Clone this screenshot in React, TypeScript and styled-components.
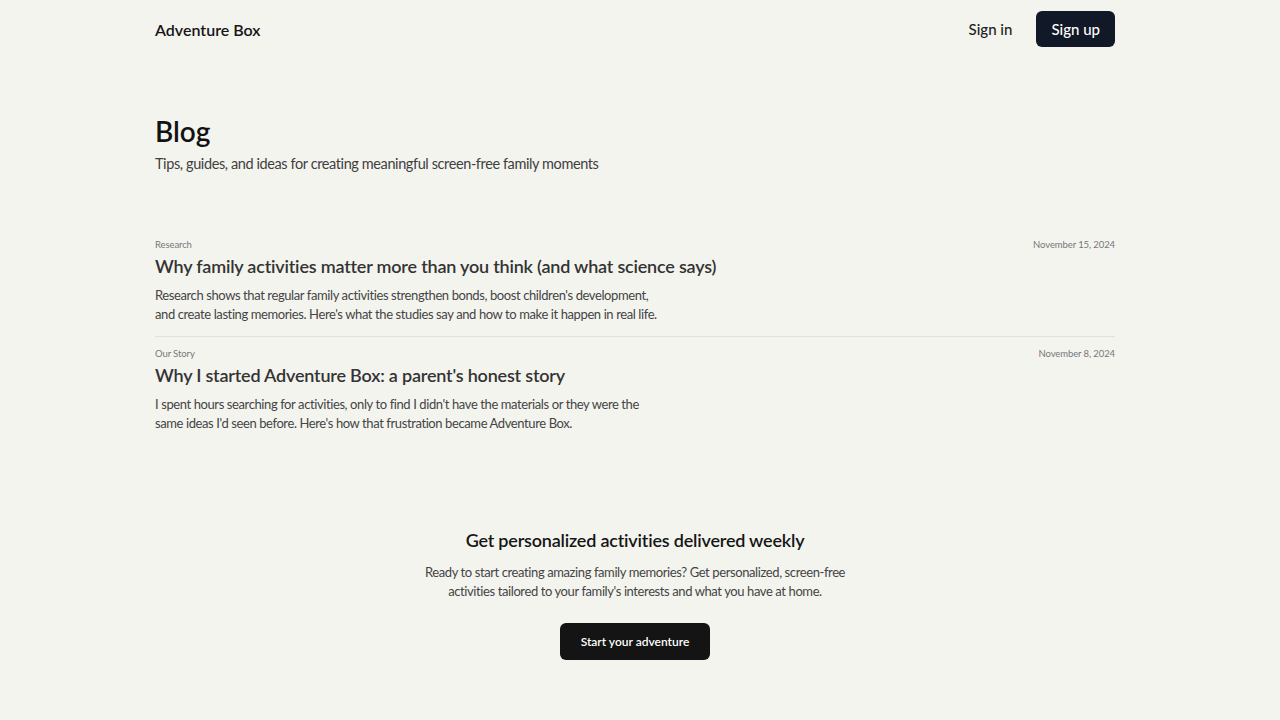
import React from 'react';
import styled, { createGlobalStyle } from 'styled-components';

const GlobalStyle = createGlobalStyle`
  html, body {
    margin: 0;
    padding: 0;
    background: #f4f4ef;
  }
  body {
    font-family: 'Lato', 'Liberation Sans', sans-serif;
    color: #1a1a1a;
  }
`;

const headingFont = `'Lato', 'Liberation Sans', sans-serif`;

const Page = styled.div`
  padding-right: 10px;
`;

const Container = styled.div`
  width: 960px;
  margin: 0 auto;
`;

const Header = styled.header`
  height: 58px;
  display: flex;
  align-items: center;
  justify-content: space-between;
`;

const Brand = styled.div`
  font-family: ${headingFont};
  font-weight: 600;
  font-size: 16px;
  color: #161616;
`;

const Nav = styled.nav`
  display: flex;
  align-items: center;
  gap: 24px;
`;

const NavButton = styled.button<{ $primary?: boolean }>`
  font-family: ${headingFont};
  font-size: 15px;
  font-weight: 500;
  border: none;
  border-radius: 6px;
  height: 36px;
  padding: ${(p) => (p.$primary ? '0 15px' : '0')};
  cursor: pointer;
  background: ${(p) => (p.$primary ? '#111827' : 'transparent')};
  color: ${(p) => (p.$primary ? '#ffffff' : '#222222')};
`;

const Intro = styled.section`
  padding-top: 56px;
  padding-bottom: 56px;
`;

const Title = styled.h1`
  font-family: ${headingFont};
  font-size: 28px;
  font-weight: 600;
  margin: 0 0 7px;
  color: #121212;
`;

const Lead = styled.p`
  font-size: 14.5px;
  letter-spacing: -0.4px;
  color: #404040;
  margin: 0;
`;

const PostList = styled.div`
  display: flex;
  flex-direction: column;
`;

const Post = styled.article<{ $last?: boolean }>`
  padding: 11px 0 12px;
  border-bottom: ${(p) => (p.$last ? 'none' : '1px solid #e2e2dd')};
`;

const Meta = styled.div`
  display: flex;
  justify-content: space-between;
  font-size: 9.5px;
  letter-spacing: -0.1px;
  color: #777;
`;

const PostTitle = styled.h2`
  font-family: ${headingFont};
  font-size: 18px;
  letter-spacing: -0.2px;
  font-weight: 600;
  color: #333;
  margin: 5px 0 9px;
`;

const Excerpt = styled.p`
  font-size: 13px;
  letter-spacing: -0.4px;
  line-height: 19px;
  color: #444;
  max-width: 505px;
  margin: 0;
`;

const Cta = styled.section`
  text-align: center;
  padding-top: 84px;
`;

const CtaTitle = styled.h3`
  font-family: ${headingFont};
  font-size: 18px;
  letter-spacing: -0.2px;
  font-weight: 600;
  color: #161616;
  margin: 0 0 12px;
`;

const CtaText = styled.p`
  font-size: 13px;
  letter-spacing: -0.4px;
  line-height: 19px;
  color: #444;
  width: 440px;
  margin: 0 auto 22px;
`;

const CtaButton = styled.button`
  font-family: ${headingFont};
  font-size: 12px;
  font-weight: 600;
  color: #fff;
  background: #141414;
  border: none;
  border-radius: 6px;
  width: 150px;
  height: 37px;
  cursor: pointer;
`;

const posts = [
  {
    category: 'Research',
    date: 'November 15, 2024',
    title: 'Why family activities matter more than you think (and what science says)',
    excerpt:
      "Research shows that regular family activities strengthen bonds, boost children's development, and create lasting memories. Here's what the studies say and how to make it happen in real life.",
  },
  {
    category: 'Our Story',
    date: 'November 8, 2024',
    title: "Why I started Adventure Box: a parent's honest story",
    excerpt:
      "I spent hours searching for activities, only to find I didn't have the materials or they were the same ideas I'd seen before. Here's how that frustration became Adventure Box.",
  },
];

const App = () => (
  <Page>
    <GlobalStyle />
    <Container>
      <Header>
        <Brand>Adventure Box</Brand>
        <Nav>
          <NavButton>Sign in</NavButton>
          <NavButton $primary>Sign up</NavButton>
        </Nav>
      </Header>
      <Intro>
        <Title>Blog</Title>
        <Lead>Tips, guides, and ideas for creating meaningful screen-free family moments</Lead>
      </Intro>
      <PostList>
        {posts.map((post, i) => (
          <Post key={post.title} $last={i === posts.length - 1}>
            <Meta>
              <span>{post.category}</span>
              <span>{post.date}</span>
            </Meta>
            <PostTitle>{post.title}</PostTitle>
            <Excerpt>{post.excerpt}</Excerpt>
          </Post>
        ))}
      </PostList>
      <Cta>
        <CtaTitle>Get personalized activities delivered weekly</CtaTitle>
        <CtaText>
          Ready to start creating amazing family memories? Get personalized, screen-free
          activities tailored to your family's interests and what you have at home.
        </CtaText>
        <CtaButton>Start your adventure</CtaButton>
      </Cta>
    </Container>
  </Page>
);

export default App;
